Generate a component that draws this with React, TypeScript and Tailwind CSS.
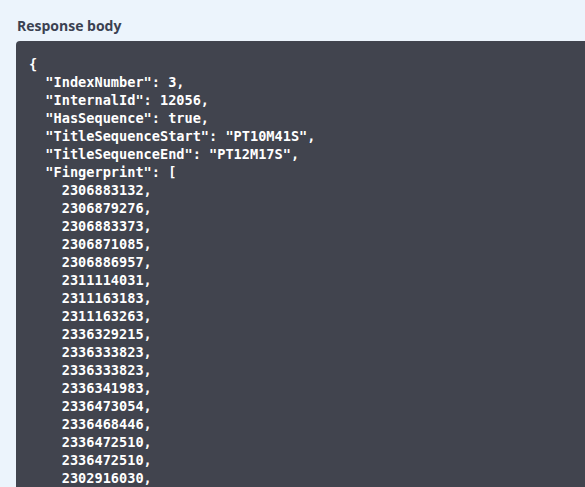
import React from "react";

const nums = [
  "2306883132",
  "2306879276",
  "2306883373",
  "2306871085",
  "2306886957",
  "2311114031",
  "2311163183",
  "2311163263",
  "2336329215",
  "2336333823",
  "2336333823",
  "2336341983",
  "2336473054",
  "2336468446",
  "2336472510",
  "2336472510",
  "2302916030",
  "2302916030",
];

export default function App() {
  const lines = [
    "{",
    '  "IndexNumber": 3,',
    '  "InternalId": 12056,',
    '  "HasSequence": true,',
    '  "TitleSequenceStart": "PT10M41S",',
    '  "TitleSequenceEnd": "PT12M17S",',
    '  "Fingerprint": [',
    ...nums.map((n) => `    ${n},`),
  ];
  return (
    <div className="w-[585px] h-[487px] overflow-hidden bg-[#ecf4fc] pl-4 pt-[16px]">
      <div
        className="text-[14px] font-bold text-[#3b4151] leading-[20px] pl-px mb-[5px]"
        style={{ fontFamily: '"Open Sans", "Noto Sans", sans-serif' }}
      >
        Response body
      </div>
      <div className="bg-[#41444e] rounded-[4px] w-[600px] pt-[14px] pl-[13px]">
        <pre
          className="text-white font-bold text-[13.6px] leading-[18px] m-0"
          style={{ fontFamily: '"DejaVu Sans Mono", monospace' }}
        >
          {lines.join("\n")}
        </pre>
      </div>
    </div>
  );
}
